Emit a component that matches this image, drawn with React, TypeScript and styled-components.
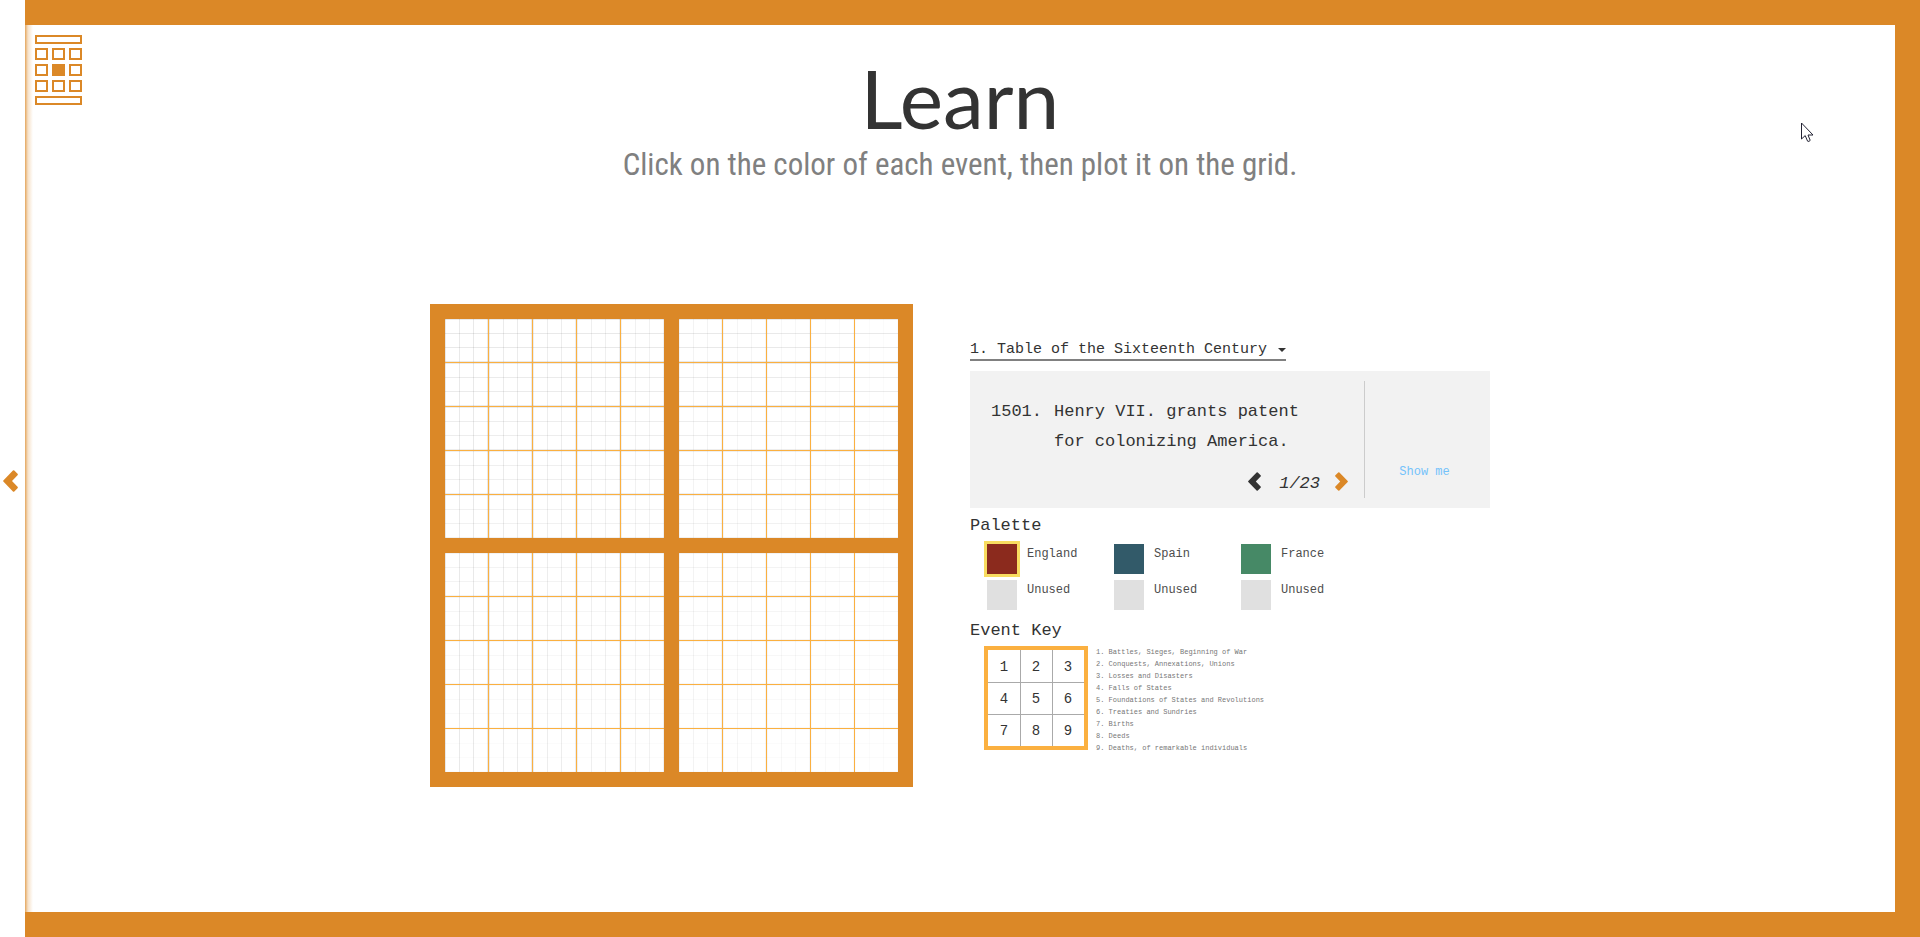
import React, { useState } from "react";
import styled, { createGlobalStyle } from "styled-components";

const orange = "#db8827";
const amber = "#fbb040";
const ink = "#333333";
const mono = '"Liberation Mono", monospace';

const GlobalStyle = createGlobalStyle`
  *, *::before, *::after { box-sizing: border-box; }
  body { margin: 0; background: #ffffff; color: ${ink}; font-family: ${mono}; }
  h1, h2, p, ol, ul { margin: 0; padding: 0; font-weight: 400; }
  ol, ul { list-style: none; }
  button, select { font: inherit; color: inherit; margin: 0; padding: 0; border: 0; background: none; cursor: pointer; }
  svg { display: block; }
`;

const Page = styled.div`
  position: relative;
  display: flex;
  min-height: 100vh;
`;

const SideStrip = styled.nav`
  flex: 0 0 25px;
  display: flex;
  align-items: center;
  padding: 25px 0 0 3px;
`;

const Frame = styled.main`
  position: relative;
  flex: 1;
  border: solid ${orange};
  border-width: 25px 25px 25px 0;
  background: linear-gradient(to right, rgba(219, 136, 39, 0.75), rgba(219, 136, 39, 0.25) 3px, transparent 8px);
  padding: 26px 0 64px;
`;

const LogoLink = styled.a`
  position: absolute;
  top: 10px;
  left: 10px;
`;

const Title = styled.h1`
  font-family: Lato, sans-serif;
  font-size: 82px;
  line-height: 92px;
  text-align: center;
`;

const Subtitle = styled.p`
  margin-top: 2px;
  font-family: "Roboto Condensed", "Open Sans", sans-serif;
  font-size: 31px;
  line-height: 40px;
  text-align: center;
  color: #808080;
`;

const Workspace = styled.section`
  display: flex;
  justify-content: space-between;
  align-items: flex-start;
  max-width: 1060px;
  margin: 119px auto 0;
`;

const Board = styled.div`
  display: grid;
  grid-template-columns: repeat(2, auto);
  gap: 15px;
  padding: 15px;
  background: ${orange};
`;

const Quadrant = styled.div`
  display: grid;
  grid-template-columns: repeat(5, 43px);
  grid-auto-rows: 43px;
  gap: 1px;
  background: ${amber};
`;

const Year = styled.div<{ $v: number; $h: number }>`
  background:
    repeating-linear-gradient(to right, rgba(0, 0, 0, ${(p) => p.$v}) 0 1px, transparent 1px 14px),
    repeating-linear-gradient(to bottom, rgba(0, 0, 0, ${(p) => p.$h}) 0 1px, transparent 1px 14px),
    #ffffff;
`;

const Panel = styled.div`
  width: 520px;
  padding-top: 37px;
`;

const TablePicker = styled.div`
  position: relative;
  width: 316px;
  border-bottom: 2px solid #808080;

  svg {
    position: absolute;
    right: 0;
    top: 7px;
    pointer-events: none;
  }
`;

const TableSelect = styled.select`
  display: block;
  appearance: none;
  width: 100%;
  height: 18px;
  font-size: 15px;
  line-height: 18px;
`;

const EventCard = styled.article`
  display: flex;
  margin-top: 10px;
  padding: 10px 0;
  background: #f2f2f2;
`;

const EventMain = styled.div`
  flex: 0 0 394px;
  padding: 16px 16px 7px 21px;
`;

const EventText = styled.p`
  display: flex;
  font-size: 17px;
  line-height: 30px;
`;

const EventYear = styled.span`
  flex: 0 0 63px;
`;

const EventBody = styled.span`
  width: 270px;
`;

const Pager = styled.div`
  display: flex;
  justify-content: flex-end;
  align-items: flex-start;
  margin-top: 15px;
  height: 19px;
`;

const PageCount = styled.span`
  margin: 0 15px 0 18px;
  font-size: 17px;
  font-style: italic;
  line-height: 24px;
`;

const EventAside = styled.div`
  flex: 1;
  display: flex;
  align-items: flex-end;
  justify-content: center;
  border-left: 1px solid #cccccc;
  padding: 0 6px 17px 0;
`;

const ShowMe = styled.button`
  font-size: 12px;
  line-height: 18px;
  color: #74c2fb;
`;

const Heading = styled.h2`
  margin-top: 6px;
  font-size: 17px;
  line-height: 24px;
`;

const PaletteList = styled.ul`
  display: grid;
  grid-template-columns: repeat(3, 127px);
  grid-auto-rows: 30px;
  row-gap: 6px;
  margin: 6px 0 9px;
  padding-left: 17px;
`;

const PaletteItem = styled.button`
  display: flex;
  gap: 10px;
  font-size: 12px;
  line-height: 20px;
  color: #4d4d4d;
`;

const Swatch = styled.span<{ $color: string; $selected: boolean }>`
  width: 30px;
  height: 30px;
  background: ${(p) => p.$color};
  box-shadow: ${(p) => (p.$selected ? "0 0 0 3px #f8dc60" : "none")};
`;

const KeyRow = styled.div`
  display: flex;
  align-items: flex-start;
  gap: 8px;
  margin-top: 3px;
  padding-left: 14px;
`;

const KeyGrid = styled.div`
  display: grid;
  grid-template-columns: repeat(3, 32px);
  grid-auto-rows: 32px;
  border: 4px solid ${amber};
`;

const KeyCell = styled.span`
  font-size: 14px;
  line-height: 34px;
  text-align: center;

  &:not(:nth-child(3n + 1)) { box-shadow: inset 1px 0 #aaaaaa; }
  &:nth-child(n + 4) { box-shadow: inset 0 1px #aaaaaa; }
  &:nth-child(n + 4):not(:nth-child(3n + 1)) { box-shadow: inset 1px 1px #aaaaaa; }
`;

const KeyList = styled.ol`
  font-size: 7px;
  line-height: 12px;
  color: #777777;
`;

const Pointer = styled.svg`
  position: absolute;
  top: 122px;
  left: calc(100% - 119px);
  pointer-events: none;
`;

const years = Array.from({ length: 25 }, (_, i) => ({ row: Math.floor(i / 5), col: i % 5 }));
const quadrants = [0, 1, 2, 3];
const fade = (step: number) => Number((0.085 - step * 0.0075).toFixed(4));

const swatches = [
  { name: "England", color: "#8b2a1d" },
  { name: "Spain", color: "#325a69" },
  { name: "France", color: "#468966" },
  { name: "Unused", color: "#e0e0e0" },
  { name: "Unused", color: "#e0e0e0" },
  { name: "Unused", color: "#e0e0e0" },
];

const eventTypes = [
  "Battles, Sieges, Beginning of War",
  "Conquests, Annexations, Unions",
  "Losses and Disasters",
  "Falls of States",
  "Foundations of States and Revolutions",
  "Treaties and Sundries",
  "Births",
  "Deeds",
  "Deaths, of remarkable individuals",
];

function Chevron({ width, height, color, flip }: { width: number; height: number; color: string; flip?: boolean }) {
  return (
    <svg width={width} height={height} viewBox="0 0 13 19" preserveAspectRatio="none" fill={color} aria-hidden="true">
      <path
        transform={flip ? "matrix(-1 0 0 1 13 0)" : undefined}
        d="M8.6 .5 Q9.2 -.1 9.8 .5 L12.6 3.3 Q13.2 3.9 12.6 4.5 L7.8 9.5 L12.6 14.5 Q13.2 15.1 12.6 15.7 L9.8 18.5 Q9.2 19.1 8.6 18.5 L.3 10 Q-.1 9.5 .3 9 Z"
      />
    </svg>
  );
}

function Logo() {
  const cells = [0, 1, 2].flatMap((r) => [0, 1, 2].map((c) => ({ r, c })));
  return (
    <svg width="47" height="70" fill="none" stroke={orange} strokeWidth="2" aria-hidden="true">
      <rect x="1" y="1" width="45" height="7" />
      {cells.map(({ r, c }) => (
        <rect
          key={`${r}${c}`}
          x={1 + c * 17}
          y={14 + r * 16}
          width="11"
          height="10"
          fill={r === 1 && c === 1 ? orange : "none"}
        />
      ))}
      <rect x="1" y="62" width="45" height="7" />
    </svg>
  );
}

export default function App() {
  const [selected, setSelected] = useState(0);

  return (
    <Page>
      <GlobalStyle />
      <SideStrip>
        <button aria-label="Previous section">
          <Chevron width={15} height={22} color={orange} />
        </button>
      </SideStrip>
      <Frame>
        <LogoLink href="#" aria-label="Home">
          <Logo />
        </LogoLink>
        <Title>Learn</Title>
        <Subtitle>Click on the color of each event, then plot it on the grid.</Subtitle>

        <Workspace>
          <Board>
            {quadrants.map((q) => (
              <Quadrant key={q}>
                {years.map(({ row, col }) => (
                  <Year
                    key={`${row}-${col}`}
                    $v={fade((q % 2) * 5 + col)}
                    $h={fade(Math.floor(q / 2) * 5 + row)}
                  />
                ))}
              </Quadrant>
            ))}
          </Board>

          <Panel>
            <TablePicker>
              <TableSelect aria-label="Table">
                <option>1. Table of the Sixteenth Century</option>
              </TableSelect>
              <svg width="8" height="4" fill={ink} aria-hidden="true">
                <path d="M0 0 H8 L4 4 Z" />
              </svg>
            </TablePicker>

            <EventCard>
              <EventMain>
                <EventText>
                  <EventYear>1501.</EventYear>
                  <EventBody>Henry VII. grants patent for colonizing America.</EventBody>
                </EventText>
                <Pager>
                  <button aria-label="Previous event">
                    <Chevron width={13} height={19} color={ink} />
                  </button>
                  <PageCount>1/23</PageCount>
                  <button aria-label="Next event">
                    <Chevron width={13} height={19} color={orange} flip />
                  </button>
                </Pager>
              </EventMain>
              <EventAside>
                <ShowMe>Show me</ShowMe>
              </EventAside>
            </EventCard>

            <Heading>Palette</Heading>
            <PaletteList>
              {swatches.map((s, i) => (
                <li key={i}>
                  <PaletteItem onClick={() => setSelected(i)} aria-pressed={selected === i}>
                    <Swatch $color={s.color} $selected={selected === i} />
                    {s.name}
                  </PaletteItem>
                </li>
              ))}
            </PaletteList>

            <Heading>Event Key</Heading>
            <KeyRow>
              <KeyGrid>
                {eventTypes.map((_, i) => (
                  <KeyCell key={i}>{i + 1}</KeyCell>
                ))}
              </KeyGrid>
              <KeyList>
                {eventTypes.map((t, i) => (
                  <li key={t}>{`${i + 1}. ${t}`}</li>
                ))}
              </KeyList>
            </KeyRow>
          </Panel>
        </Workspace>
      </Frame>
      <Pointer width="13" height="21" viewBox="0 0 13 21" aria-hidden="true">
        <path
          d="M.5 1 V17 L4.2 13.6 L6.6 19.2 Q8 20 9.2 18.4 L7 13 H12 Z"
          fill="#ffffff"
          stroke="#222233"
          strokeWidth="1"
        />
      </Pointer>
    </Page>
  );
}
